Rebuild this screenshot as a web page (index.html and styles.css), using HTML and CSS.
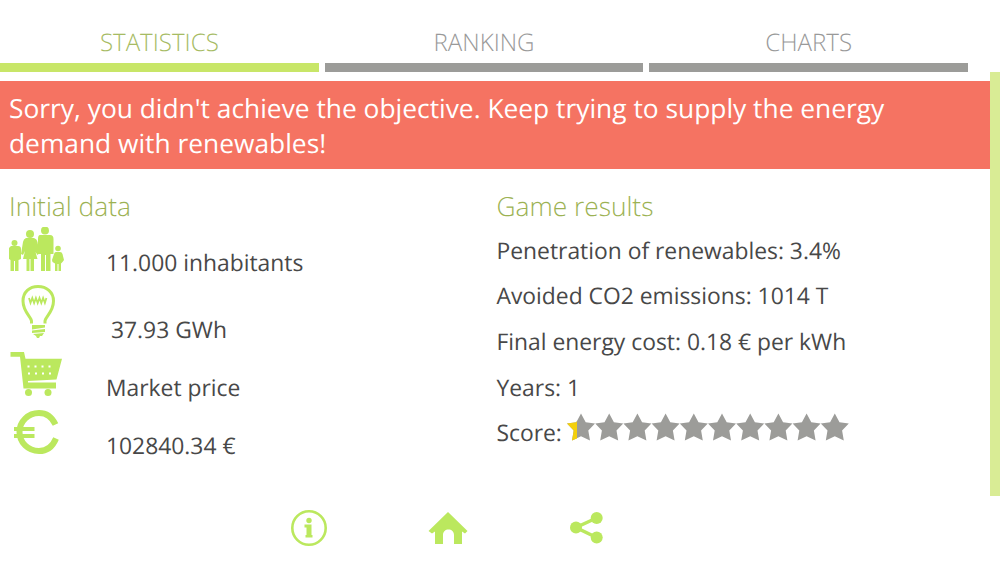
FILE: index.html
```html
<!DOCTYPE html>
<html lang="en">
<head>
    <title>Game results</title>
    <meta charset="utf-8">
    <link rel="stylesheet" href="styles.css">
</head>

<body>
    <div class="tabs">
        <div class="tab active">STATISTICS</div>
        <div class="tab">RANKING</div>
        <div class="tab">CHARTS</div>
    </div>
    <div class="content">
        <div class="main">
            <div class="message">Sorry, you didn't achieve the objective. Keep trying to supply the energy<br>demand with renewables!</div>
            <div class="columns">
                <div class="initial">
                    <h2>Initial data</h2>
                    <div class="row">
                        <svg class="icon" width="97" height="44" viewBox="0 0 97 44">
                            <circle cx="5.5" cy="16" r="3"/>
                            <path d="M2 19h7q3 0 3 3v10l-2.500 1v11H6V34H5v10H1.500V33L0 32V21z"/>
                            <circle cx="21" cy="7" r="4"/>
                            <path d="M17 11h8q3 1 3.500 4l2 11-2 2-2-3 2 7h-3.500v12h-3.500V32h-1v12H17.500V32H14l2-8-2 4-2-1 2-12q.500-3 3-4z"/>
                            <circle cx="36" cy="3.500" r="4"/>
                            <path d="M31 8h10q3.500 0 3.500 4v15H41.500v17h-4.500V28h-1v16h-4V27h-3V12q0-4 2-4z"/>
                            <circle cx="49" cy="21.500" r="2.800"/>
                            <path d="M47 25h4q2 0 2.500 2l1.500 6-1.500 2-1.500 1.500V44h-2.500v-7h-1v7H46v-7.500L43.500 35l-.500-2 2-6q.500-2 2-2z"/>
                        </svg>
                        <span>11.000 inhabitants</span>
                    </div>
                    <div class="row energy">
                        <svg class="icon" width="102" height="53" viewBox="0 0 102 53">
                            <path class="stroke" d="M22.500 38.500v-2.500c0-4-8.500-9-8.500-20C14 7 20.500 1.500 29 1.500S44.500 7 44.500 16c0 11-8.500 16-8.500 20v2.500"/>
                            <path class="coil" d="M20 13l1.500 5 1.800-5 1.800 5 1.800-5 1.800 5 1.800-5 1.800 5 1.800-5 1.800 5 1.500-5"/>
                            <path d="M23 40h13v2.500l-13 2zM23 45.500l13-1.500v3l-13 1zM24 49l11-1-2 3h-2l-1 2h-2l-1-2z"/>
                        </svg>
                        <span>37.93 GWh</span>
                    </div>
                    <div class="row">
                        <svg class="icon" width="97" height="44" viewBox="0 0 97 44">
                            <path d="M1.500 0h13.500l1.500 6.700h36.500L47.500 27.500 19 29v1.500h28v6H14.500L11 4.700H1.500z"/>
                            <circle cx="19.500" cy="40.500" r="3.500"/>
                            <circle cx="39" cy="40.500" r="3.500"/>
                            <path class="dots" d="M18.500 14.500h26M19 21.500h24"/>
                        </svg>
                        <span>Market price</span>
                    </div>
                    <div class="row">
                        <svg class="icon" width="97" height="44" viewBox="0 0 97 44">
                            <path class="euro" d="M46.500 14.500C43 7 37 3 30 3 19 3 10.500 11.500 10.500 22S19 41 30 41c7.500 0 13.500-4 17-12.500"/>
                            <path d="M5 17h20.500v4H5zM5 24h20.500v4H5z"/>
                        </svg>
                        <span>102840.34 €</span>
                    </div>
                </div>
                <div class="results">
                    <h2>Game results</h2>
                    <p>Penetration of renewables: 3.4%</p>
                    <p>Avoided CO2 emissions: 1014 T</p>
                    <p>Final energy cost: 0.18 € per kWh</p>
                    <p>Years: 1</p>
                    <p class="score">Score:
                        <svg class="stars" width="282" height="28" viewBox="0 0 282 28">
                            <defs>
                                <path id="star" d="M14 .500l4.700 8.800 9.300 1.200-6.700 7 1.700 10-9-4.300-9 4.300 1.700-10L0 10.500l9.300-1.200z"/>
                            </defs>
                            <use href="#star"/>
                            <path class="gold" d="M0 10.500l9.300-1.200.700-1.300v17.400l-5 2.100 1.700-10z"/>
                            <use href="#star" x="28.200"/>
                            <use href="#star" x="56.400"/>
                            <use href="#star" x="84.600"/>
                            <use href="#star" x="112.800"/>
                            <use href="#star" x="141"/>
                            <use href="#star" x="169.200"/>
                            <use href="#star" x="197.400"/>
                            <use href="#star" x="225.600"/>
                            <use href="#star" x="253.800"/>
                        </svg>
                    </p>
                </div>
            </div>
        </div>
        <div class="scrollbar"></div>
    </div>
    <div class="footer">
        <svg class="icon" width="36" height="36" viewBox="0 0 36 36">
            <circle class="ring" cx="18" cy="18" r="16.700"/>
            <circle cx="18" cy="10.500" r="2.700"/>
            <path d="M13.500 14.500h7V25h1v2.500h-7V25h1v-7.500h-2z"/>
        </svg>
        <svg class="icon" width="40" height="36" viewBox="0 0 40 36">
            <path d="M20 2l19.500 19-2.500 2.500-3-2V34h-8V25c0-3.500-2.500-5.500-5.500-5.500S15 21.500 15 25v9H7V21.500l-3 2L.500 21z"/>
        </svg>
        <svg class="icon" width="36" height="36" viewBox="0 0 36 36">
            <path class="link" d="M27.500 8L7 17.500l20.500 10"/>
            <circle cx="7" cy="17.500" r="6"/>
            <circle cx="27.700" cy="8" r="6"/>
            <circle cx="27.700" cy="27.500" r="6"/>
        </svg>
    </div>
</body>

</html>
```
FILE: styles.css
```css
body {
    background-color: white;
    margin: 0px;
    padding: 0px;
    height: 563px;
    overflow: hidden;
    font-family: "Open Sans", sans-serif;
    color: #484848;
    text-rendering: geometricPrecision;
}

.tabs {
    display: flex;
    gap: 6px;
    width: 968px;
    height: 72px;
}

.tab {
    flex: 1;
    box-sizing: border-box;
    padding-top: 27px;
    border-bottom: 9px solid #9c9c99;
    text-align: center;
    font-size: 24.1px;
    line-height: 32px;
    font-weight: 300;
    color: #999;
}

.tab.active {
    border-color: #c8e668;
    color: #a6bb63;
}

.content {
    display: flex;
    height: 424px;
}

.main {
    flex: 1;
    padding-top: 9px;
}

.scrollbar {
    width: 10.5px;
    background-color: #d9ec95;
}

.message {
    box-sizing: border-box;
    height: 88px;
    padding: 10px 9px;
    background-color: #f57362;
    color: white;
    font-size: 26.35px;
    line-height: 35px;
    white-space: nowrap;
}

.columns {
    display: grid;
    grid-template-columns: 487.5px 1fr;
    padding: 19px 0 0 9px;
}

h2 {
    margin: 0;
    font-size: 26.3px;
    line-height: 36px;
    font-weight: 300;
    color: #9cb253;
}

.row {
    display: flex;
    align-items: baseline;
    height: 58px;
    font-size: 22.85px;
    line-height: 30px;
    white-space: pre;
}

.initial h2 {
    margin-bottom: 3px;
}

.energy {
    height: 67px;
}

.icon {
    fill: #bbe85e;
}

.stroke, .coil, .euro, .ring, .link {
    fill: none;
    stroke: #bbe85e;
}

.stroke { stroke-width: 3; }
.coil { stroke-width: 1.8; }
.euro { stroke-width: 6; }
.ring { stroke-width: 2.6; }
.link { stroke-width: 3.5; }

.dots {
    stroke: white;
    stroke-width: 2;
    stroke-dasharray: 2 5;
}

.results p {
    margin: 0;
    height: 45.7px;
    font-size: 22.85px;
    line-height: 45.7px;
    white-space: nowrap;
}

.results h2 {
    margin-bottom: 3.5px;
}

.results .score {
    display: flex;
    gap: 5.5px;
}

.stars {
    margin-top: 3px;
    fill: #9c9c99;
}

.stars .gold {
    fill: #f4d00c;
}

.footer {
    display: flex;
    gap: 101px;
    padding: 14px 0 0 291px;
}
```
